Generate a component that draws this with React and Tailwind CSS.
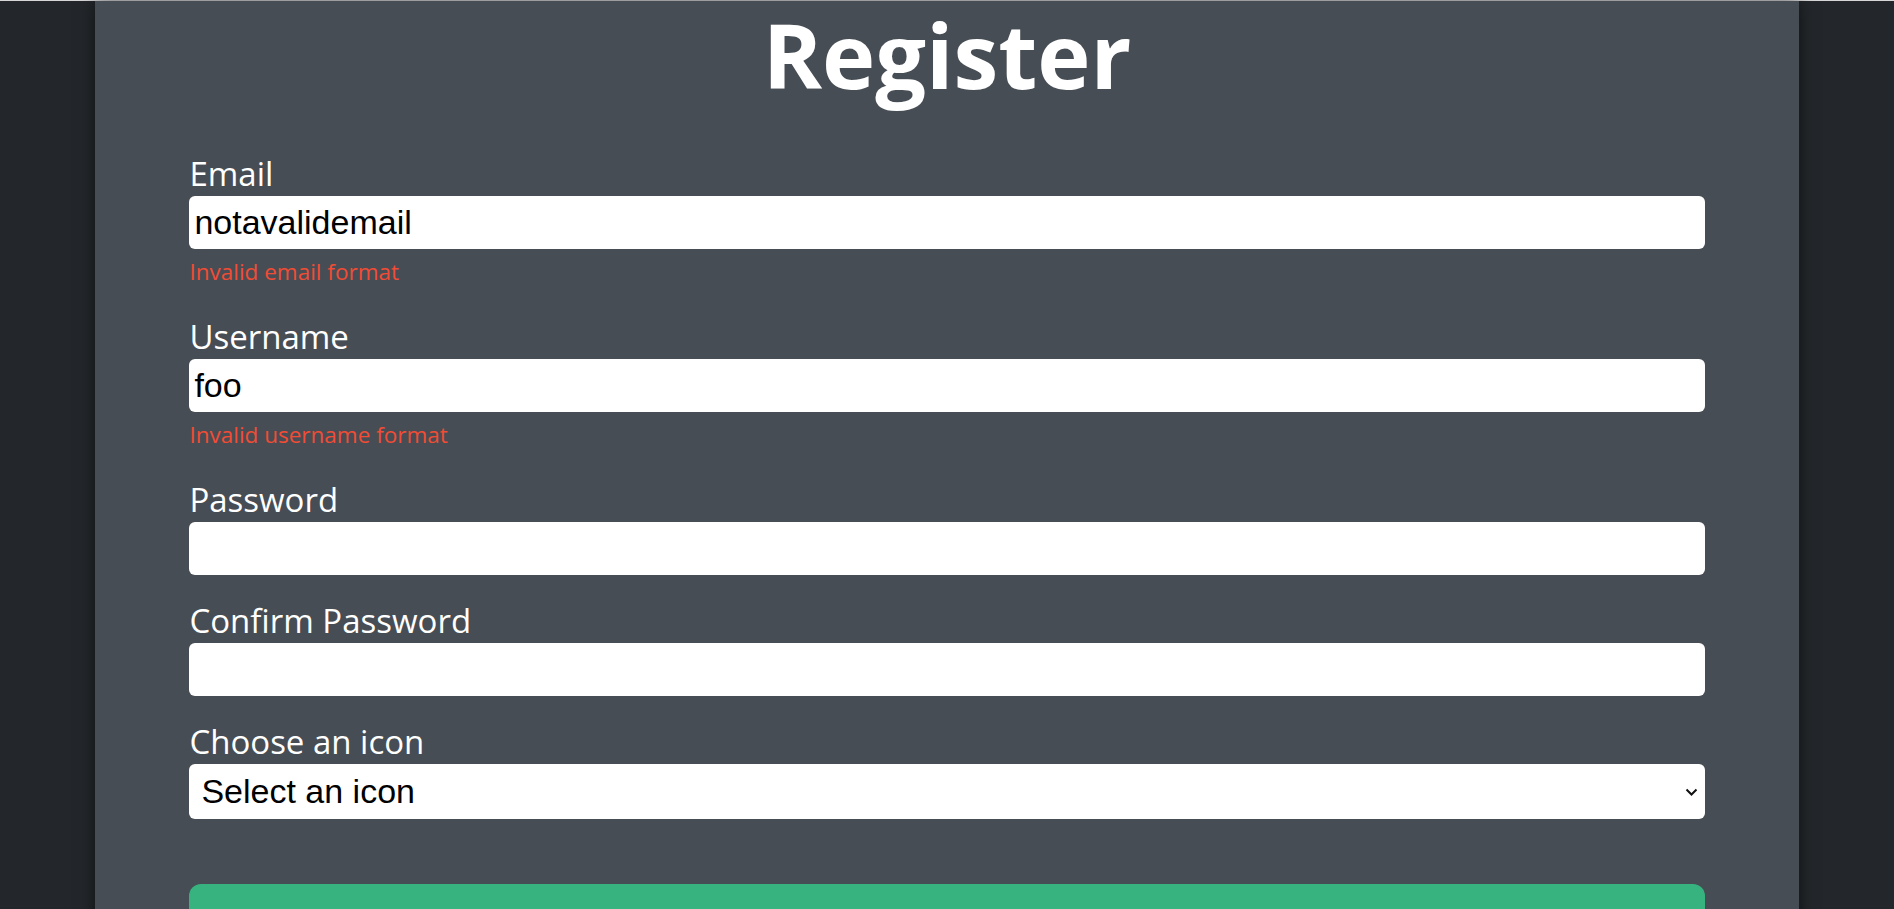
import { useState } from 'react';

/**
 * Register — Registrierungsformular mit Validierungsfehlern
 */
function Field({ label, type = 'text', value, onChange, error }) {
  return (
    <div className={error ? 'mb-[25px]' : 'mb-[21px]'}>
      <label className="block pt-[3px] text-[33px] leading-[44px] text-white">{label}</label>
      <input
        type={type}
        value={value}
        onChange={(e) => onChange(e.target.value)}
        className="block h-[53px] w-full rounded-[6px] bg-white px-[5px] text-[34px] text-black outline-none font-['Liberation_Sans',Arial,sans-serif]"
      />
      {error && (
        <p className="mt-[8px] text-[22.5px] leading-[30px] text-[#f24c35]">{error}</p>
      )}
    </div>
  );
}

export default function App() {
  const [email, setEmail] = useState('notavalidemail');
  const [username, setUsername] = useState('foo');
  const [password, setPassword] = useState('');
  const [confirm, setConfirm] = useState('');
  const [icon, setIcon] = useState('');

  return (
    <div className="min-h-screen bg-[#23272b] font-['Open_Sans',sans-serif]">
      <div className="h-px bg-[#d6d6d6]" />
      <div className="mx-auto min-h-[908px] w-[90%] bg-[#474d54] pb-10 shadow-[0_0_16px_rgba(0,0,0,0.55)]">
        <h1 className="pt-[3px] text-center text-[90px] font-bold leading-[100px] text-white">Register</h1>

        <form className="mx-auto mt-[45px] w-[80vw]" onSubmit={(e) => e.preventDefault()}>
          <Field label="Email" value={email} onChange={setEmail} error="Invalid email format" />
          <Field label="Username" value={username} onChange={setUsername} error="Invalid username format" />
          <Field label="Password" type="password" value={password} onChange={setPassword} />
          <Field label="Confirm Password" type="password" value={confirm} onChange={setConfirm} />

          <div>
            <label className="block pt-[3px] text-[33px] leading-[44px] text-white">Choose an icon</label>
            <div className="relative">
              <select
                value={icon}
                onChange={(e) => setIcon(e.target.value)}
                className="block h-[55px] w-full appearance-none rounded-[6px] bg-white pl-[12px] text-[34px] text-black outline-none font-['Liberation_Sans',Arial,sans-serif]"
              >
                <option value="">Select an icon</option>
                <option value="cat">Cat</option>
                <option value="dog">Dog</option>
                <option value="fox">Fox</option>
              </select>
              <svg
                className="pointer-events-none absolute right-[7px] top-1/2 h-[12px] w-[13px] -translate-y-1/2"
                viewBox="0 0 13 12"
                fill="none"
                stroke="#111"
                strokeWidth="2"
              >
                <path d="M1.5 3.5 L6.5 8.5 L11.5 3.5" />
              </svg>
            </div>
          </div>

          <button
            type="submit"
            className="mt-[65px] block h-[90px] w-full rounded-[12px] bg-[#36b37e] text-[32px] font-semibold text-white"
          >
            Register
          </button>
        </form>
      </div>
    </div>
  );
}
